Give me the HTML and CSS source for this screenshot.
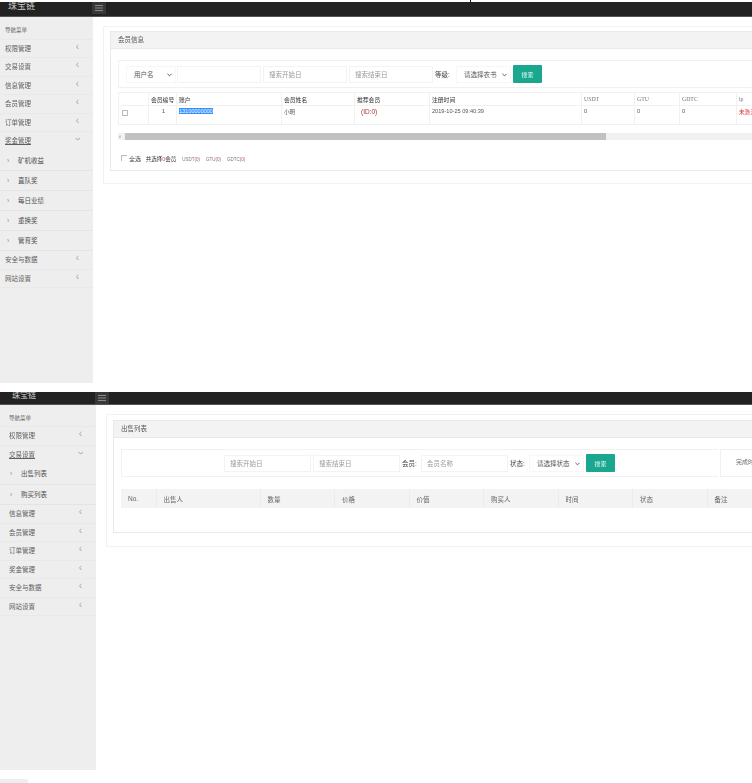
FILE: index.html
```html
<!DOCTYPE html>
<html lang="zh-CN">
<head>
<meta charset="utf-8">
<title>珠宝链</title>
<link rel="stylesheet" href="styles.css">
</head>
<body>
<div class="tick"></div>
<section class="shot shot-a">
  <header class="topbar">
    <div class="logo">珠宝链</div>
    <button class="toggle" type="button"><svg viewBox="0 0 8 6" width="8" height="6"><path d="M0 .5h8M0 3h8M0 5.500h8" stroke="#8a8a8a" stroke-width="1"/></svg></button>
  </header>
  <div class="body-row">
    <nav class="side">
      <div class="nav-head">导航菜单</div>
      <div class="nav-item">权限管理<i class="chev">‹</i></div>
      <div class="nav-item">交易设置<i class="chev">‹</i></div>
      <div class="nav-item">信息管理<i class="chev">‹</i></div>
      <div class="nav-item">会员管理<i class="chev">‹</i></div>
      <div class="nav-item">订单管理<i class="chev">‹</i></div>
      <div class="nav-item open"><u>奖金管理</u><i class="chev down">‹</i></div>
      <div class="nav-sub"><b>›</b>矿机收益</div>
      <div class="nav-sub"><b>›</b>直队奖</div>
      <div class="nav-sub"><b>›</b>每日业绩</div>
      <div class="nav-sub"><b>›</b>重换奖</div>
      <div class="nav-sub"><b>›</b>管育奖</div>
      <div class="nav-item">安全与数据<i class="chev">‹</i></div>
      <div class="nav-item">网站设置<i class="chev">‹</i></div>
    </nav>
    <main class="main">
      <div class="outer">
        <div class="card">
          <div class="card-title">会员信息</div>
          <div class="card-body">
            <div class="filter">
              <div class="pick pick-user">用户名<svg class="caret" viewBox="0 0 6 4"><path d="M.5.5 3 3 5.500.5" fill="none" stroke="#444"/></svg></div>
              <div class="field field-blank"></div>
              <div class="field">搜索开始日</div>
              <div class="field">搜索结束日</div>
              <label class="lab">等级:</label>
              <div class="pick pick-wide">请选择农书<svg class="caret" viewBox="0 0 6 4"><path d="M.5.5 3 3 5.500.5" fill="none" stroke="#444"/></svg></div>
              <button class="go" type="button">搜索</button>
            </div>
            <div class="tbl-wrap">
              <table class="tbl">
                <colgroup><col class="c1"><col class="c2"><col class="c3"><col class="c4"><col class="c5"><col class="c6"><col class="c7"><col class="c8"><col class="c9"><col class="c10"></colgroup>
                <thead><tr><th></th><th>会员编号</th><th>账户</th><th>会员姓名</th><th>推荐会员</th><th>注册时间</th><th class="latin">USDT</th><th class="latin">GTU</th><th class="latin">GDTC</th><th class="latin">ip</th></tr></thead>
                <tbody><tr><td><span class="check"></span></td><td class="mid">1</td><td><span class="sel">13100000000</span></td><td>小明</td><td class="idref">(ID:0)</td><td>2019-10-25 09:40:39</td><td>0</td><td>0</td><td>0</td><td class="warn">未激活</td></tr></tbody>
              </table>
            </div>
            <div class="scroll"><span class="arrow">‹</span><div class="thumb"></div></div>
            <div class="foot"><span class="check check-foot"></span>全选 <span class="dark">共选择<em>0</em>会员</span><span class="unit">USDT(<em>0</em>)</span><span class="unit">GTU(<em>0</em>)</span><span class="unit">GDTC(<em>0</em>)</span></div>
          </div>
        </div>
      </div>
    </main>
  </div>
</section>

<section class="shot shot-b">
  <header class="topbar">
    <div class="logo">珠宝链</div>
    <button class="toggle" type="button"><svg viewBox="0 0 8 6" width="8" height="6"><path d="M0 .5h8M0 3h8M0 5.500h8" stroke="#8a8a8a" stroke-width="1"/></svg></button>
  </header>
  <div class="body-row">
    <nav class="side">
      <div class="nav-head">导航菜单</div>
      <div class="nav-item">权限管理<i class="chev">‹</i></div>
      <div class="nav-item open"><u>交易设置</u><i class="chev down">‹</i></div>
      <div class="nav-sub"><b>›</b>出售列表</div>
      <div class="nav-sub"><b>›</b>购买列表</div>
      <div class="nav-item">信息管理<i class="chev">‹</i></div>
      <div class="nav-item">会员管理<i class="chev">‹</i></div>
      <div class="nav-item">订单管理<i class="chev">‹</i></div>
      <div class="nav-item">奖金管理<i class="chev">‹</i></div>
      <div class="nav-item">安全与数据<i class="chev">‹</i></div>
      <div class="nav-item">网站设置<i class="chev">‹</i></div>
    </nav>
    <main class="main">
      <div class="outer">
        <div class="card">
          <div class="card-title">出售列表</div>
          <div class="card-body">
            <div class="filter-row">
              <div class="filter">
                <div class="field">搜索开始日</div>
                <div class="field">搜索结束日</div>
                <label class="lab">会员:</label>
                <div class="field">会员名称</div>
                <label class="lab">状态:</label>
                <div class="pick pick-wide">请选择状态<svg class="caret" viewBox="0 0 6 4"><path d="M.5.5 3 3 5.500.5" fill="none" stroke="#444"/></svg></div>
                <button class="go" type="button">搜索</button>
              </div>
              <div class="filter-side">完成时间</div>
            </div>
            <div class="tbl-wrap">
              <table class="tbl tbl-b">
                <colgroup><col class="d1"><col class="d2"><col class="d3"><col class="d3"><col class="d3"><col class="d3"><col class="d3"><col class="d3"><col class="d3"></colgroup>
                <thead><tr><th>No.</th><th>出售人</th><th>数量</th><th>价格</th><th>价值</th><th>购买人</th><th>时间</th><th>状态</th><th>备注</th></tr></thead>
              </table>
            </div>
          </div>
        </div>
      </div>
    </main>
  </div>
</section>
<div class="tail"></div>
</body>
</html>
```
FILE: styles.css
```css
* { box-sizing: border-box; }
html, body { margin: 0; padding: 0; overflow: hidden; background: #fff; }
body {
  width: 752px;
  height: 783px;
  font-family: "Liberation Sans", "Noto Sans CJK SC", sans-serif;
  font-size: 6px;
  color: #676a6c;
}
.tick { width: 1px; height: 2px; margin-left: 470px; background: #111; }

.shot { overflow: hidden; filter: blur(0.4px); }
.shot-a { height: 381px; --side: 93px; --bar: 15px; --row: 18.550px; --sub: 20.100px; --head: 22.500px; }
.shot-b { height: 378px; margin-top: 9px; --side: 96px; --bar: 13px; --row: 18.500px; --sub: 20.500px; --head: 22px; }

.topbar {
  height: var(--bar);
  background: #222;
  border-bottom: 1px solid #555;
  display: flex;
  overflow: hidden;
}
.logo {
  width: var(--side);
  color: #ccc;
  font-size: 9px;
  line-height: 9px;
  padding-left: 8px;
}
.shot-b .logo { font-size: 8px; padding-left: 12px; line-height: 8px; }
.toggle {
  width: 14px;
  height: 12px;
  padding: 0;
  border: 0;
  background: #383838;
  display: flex;
  align-items: center;
  justify-content: center;
  margin-left: -1px;
}

.body-row { display: flex; height: 366px; }
.side {
  flex: none;
  width: var(--side);
  background: #eeeeee;
  font-size: 6.500px;
  color: #5f5f5f;
}
.nav-head {
  height: var(--head);
  padding: 9px 0 0 5px;
  font-size: 5.500px;
  line-height: 8px;
  border-bottom: 1px solid #e8e8e8;
}
.shot-b .nav-head, .shot-b .nav-item { padding-left: 9px; }
.nav-item {
  position: relative;
  height: var(--row);
  line-height: 18px;
  padding-left: 5px;
  border-bottom: 1px solid #e9e9e9;
}
.nav-item.open { border-bottom: 0; }
.nav-sub {
  height: var(--sub);
  line-height: 20px;
  padding-left: 7px;
  border-bottom: 1px solid #e4e4e4;
  color: #4e4e4e;
}
.nav-sub b { font-weight: 400; color: #888; display: inline-block; width: 11px; }
.shot-b .nav-sub { padding-left: 10px; }
.chev {
  position: absolute;
  right: 14px;
  top: 0;
  font-style: normal;
  font-size: 10px;
  line-height: 14px;
  color: #a8a8a8;
}
.chev.down { transform: rotate(-90deg); right: 14px; }

.main { flex: 1; min-width: 0; padding: 9px 0 0 10px; }
.outer {
  width: 700px;
  padding: 4px 0 12px 6px;
  border: 1px solid #f2f2f2;
  border-right: 0;
}
.shot-b .outer { padding-top: 5px; padding-bottom: 13px; }
.card { border: 1px solid #e7eaec; border-right: 0; height: 140px; }
.shot-b .card { height: 113px; }
.card-title {
  height: 17px;
  background: #f3f3f4;
  border-bottom: 1px solid #e7eaec;
  padding-left: 7px;
  font-size: 6.500px;
  line-height: 15px;
  color: #555;
}
.card-body { padding: 11px 0 0 7px; }
.filter {
  height: 28px;
  display: flex;
  align-items: center;
  gap: 2px;
  padding-left: 7px;
  border: 1px solid #f1f1f1;
  border-right: 0;
  flex: none;
}
.filter-row { display: flex; gap: 2px; }
.shot-b .filter { width: 597px; padding-left: 102px; }
.filter-side {
  flex: 1;
  border: 1px solid #f1f1f1;
  border-right: 0;
  padding-left: 15px;
  line-height: 25px;
  white-space: nowrap;
}
.field {
  width: 84px;
  height: 17px;
  padding-left: 5px;
  line-height: 15px;
  font-size: 6.500px;
  color: #9a9a9a;
  border: 1px solid #f3f3f3;
  background: #fff;
}
.shot-b .field { width: 87px; }
.field-blank { margin-left: -1px; }
.pick {
  position: relative;
  height: 17px;
  line-height: 15px;
  padding-left: 7px;
  font-size: 6.500px;
  color: #555;
  background: #fff;
  border: 1px solid #f7f7f7;
}
.pick-user { width: 50px; }
.pick-wide { width: 55px; }
.shot-a .pick-wide { margin-left: 2px; }
.caret { position: absolute; right: 3px; top: 6px; width: 5px; height: 4px; }
.lab { width: 17px; font-size: 6.500px; color: #444; white-space: nowrap; }
.go {
  width: 29px;
  height: 18px;
  padding: 0;
  border: 0;
  border-radius: 1px;
  background: #19a78f;
  color: #e9fbf7;
  font: inherit;
}
.tbl-wrap { width: 640px; overflow: hidden; margin-top: 4px; }
.shot-b .tbl-wrap { margin-top: 12px; }
.tbl { border-collapse: collapse; table-layout: fixed; width: 658px; color: #555; }
.tbl-b { width: 660.500px; }
.tbl th, .tbl td { border: 1px solid #f1f1f1; padding: 0 0 0 2px; text-align: left; overflow: hidden; white-space: nowrap; }
.tbl th { height: 13px; font-weight: 400; color: #333; font-size: 5.800px; }
.tbl td { height: 19px; vertical-align: top; padding-top: 2px; font-size: 5.600px; }
.tbl .latin { font-family: "Liberation Serif", serif; color: #777; }
.tbl .mid { text-align: center; }
.c1 { width: 30px; } .c2 { width: 28px; } .c3 { width: 105px; } .c4 { width: 73px; } .c5 { width: 75px; }
.c6 { width: 152px; } .c7 { width: 53px; } .c8 { width: 45px; } .c9 { width: 57px; } .c10 { width: 40px; }
.tbl-b th { height: 19px; background: #f3f3f4; border: 0; border-right: 1px solid #ececec; padding-left: 7px; font-size: 6.500px; color: #666; }
.d1 { width: 35px; } .d2 { width: 104px; } .d3 { width: 74.500px; }
.sel { background: #3390ff; color: #fff; font-size: 5.500px; }
.tbl .idref { color: #a33; padding-left: 6px; font-size: 6.500px; }
.warn { color: #e03030; }
.check { display: inline-block; width: 6px; height: 6px; border: 1px solid #bbb; margin-left: 1px; margin-top: 2px; }
.check-foot { border-right: 0; border-bottom: 0; margin: 0 2px 0 3px; }
.scroll {
  position: relative;
  width: 640px;
  height: 7px;
  margin-top: 8px;
  background: #f1f1f1;
}
.thumb { position: absolute; left: 7px; top: 0; width: 481px; height: 7px; background: #c1c1c1; }
.arrow { position: absolute; left: 1px; top: 0; line-height: 6px; color: #777; }
.foot { margin-top: 15px; color: #444; font-size: 6px; line-height: 8px; }
.foot em { font-style: normal; color: #e0454b; }
.dark { color: #333; margin-left: 3px; font-size: 5.500px; }
.unit { margin-left: 6px; color: #777; font-size: 4.500px; }
.tail { width: 28px; height: 4px; margin-top: 9px; background: #eee; border-radius: 0 2px 0 0; }
```
